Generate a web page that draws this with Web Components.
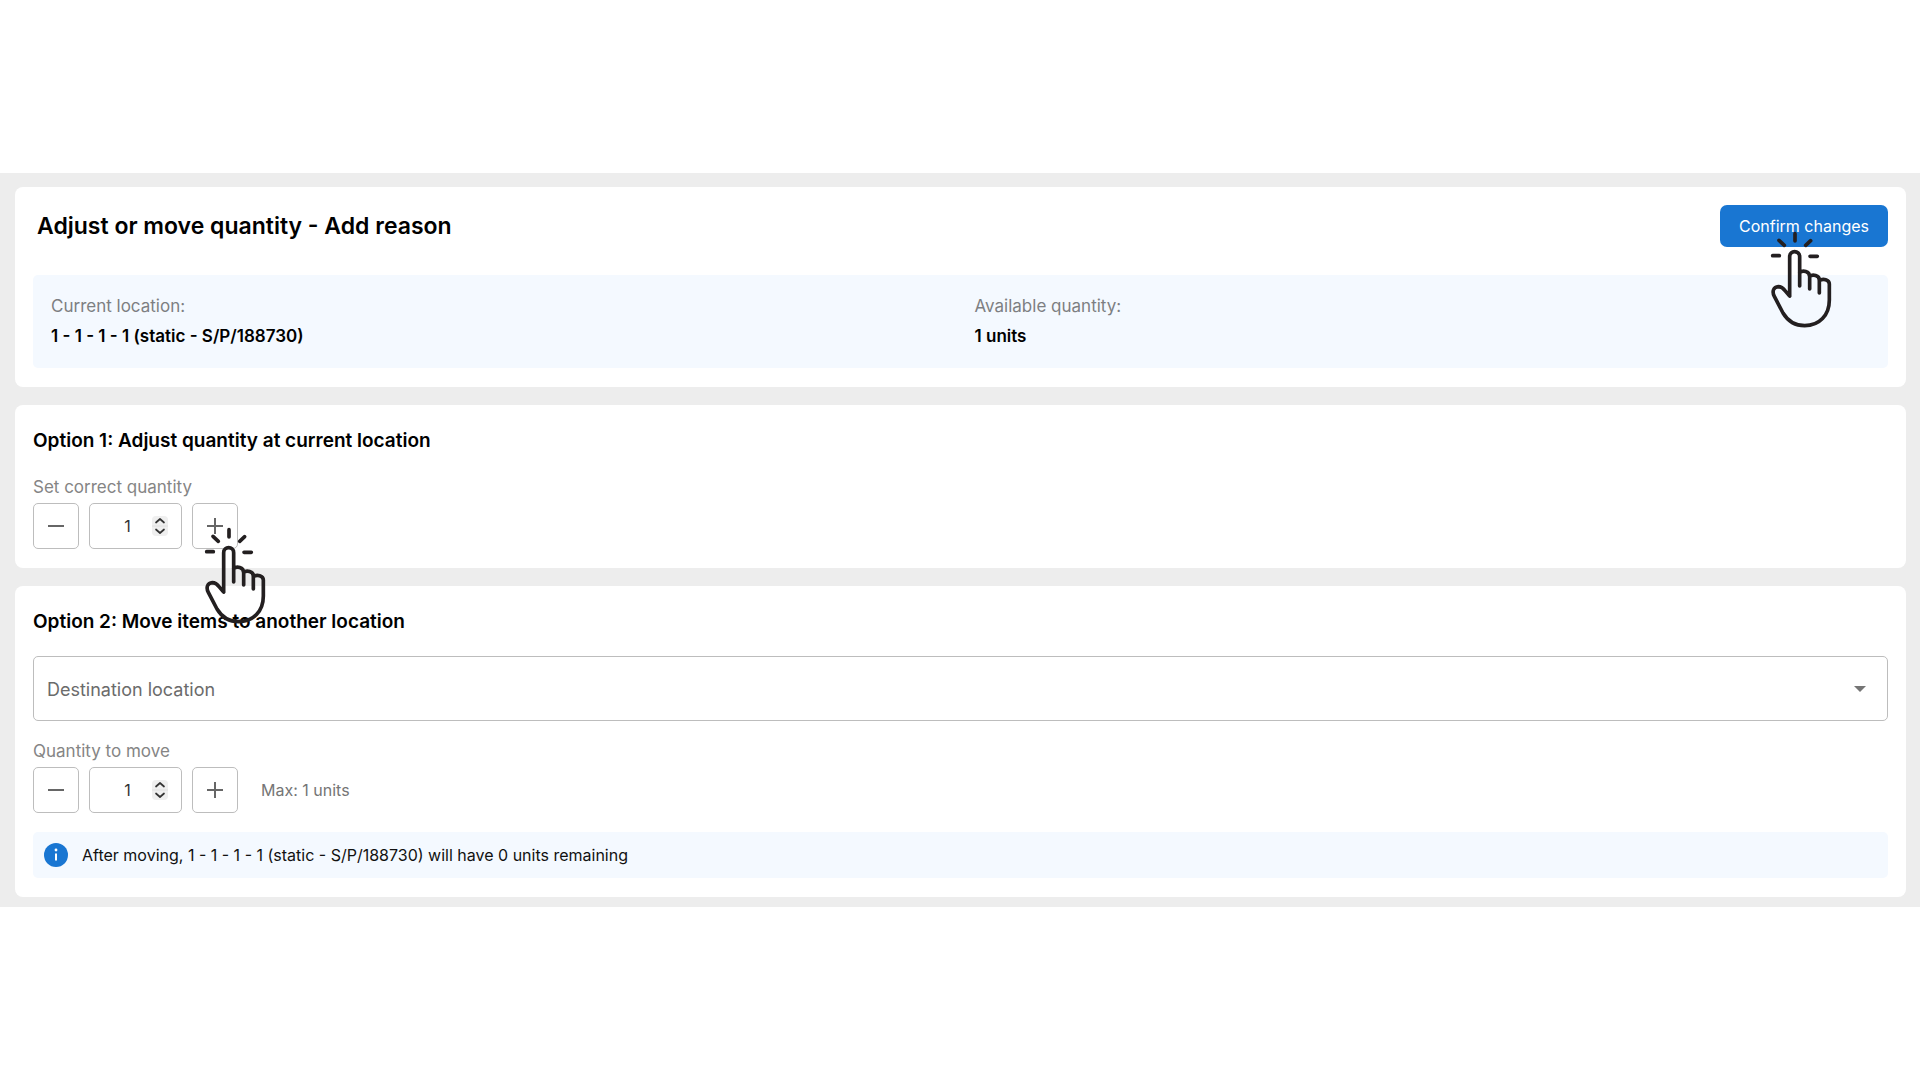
<!DOCTYPE html>
<html lang="en">
<head>
<meta charset="utf-8">
<title>Adjust or move quantity</title>
<style>
  html { background: #fff; }
  body { margin: 0; min-height: 100vh; display: flex; flex-direction: column; justify-content: center; font-family: Inter, "Liberation Sans", sans-serif; color: #000; }
</style>
</head>
<body>
<adjust-page></adjust-page>
<script>
const define = (name, html, setup) => {
  const template = document.createElement('template');
  template.innerHTML = html;
  customElements.define(name, class extends HTMLElement {
    constructor() {
      super();
      this.attachShadow({ mode: 'open' }).append(template.content.cloneNode(true));
    }
    connectedCallback() { if (setup) setup(this, this.shadowRoot); }
  });
};

define('tap-hand', `
<style>
  :host { display: block; pointer-events: none; }
  svg { display: block; width: 61px; height: 97px; overflow: visible; }
</style>
<svg viewBox="0 0 183 291" fill="none" stroke="#231f20" stroke-width="11" stroke-linecap="round" stroke-linejoin="round" aria-hidden="true">
  <path d="M75 8V30M27 28L43 43M122 29L107 43M8 74H28M120 76H142"/>
  <path d="M59 195V77C59 57 89 57 89 77V165M89 125C98 117 119 120 119 137V174M119 136C128 129 148 133 148 147V186M148 149C159 141 178 146 178 159V207C178 253 148 284 104 284C76 284 54 271 39 246L13 196C5 180 11 168 25 167C34 167 40 172 45 179L59 195"/>
</svg>`);

define('app-card', `
<style>
  :host { display: block; background: #fff; border-radius: 8px; padding: 18px 18px 19px; }
  ::slotted(h2) { margin: 6px 0 22px; font-size: 19px; line-height: 24px; font-weight: 600; }
</style>
<slot></slot>`);

define('location-field', `
<style>
  :host { display: flex; flex-direction: column; gap: 6px; font-size: 17px; line-height: 24px; font-weight: 600; }
  span { color: #7d7f82; font-weight: 400; }
</style>
<span></span><slot></slot>`, (el, root) => {
  root.querySelector('span').textContent = el.getAttribute('label');
});

define('quantity-stepper', `
<style>
  :host { display: flex; flex-direction: column; gap: 4px; }
  label { font-size: 17px; line-height: 24px; color: #858585; }
  .row { display: flex; align-items: center; gap: 10px; }
  .plus { position: relative; }
  button { display: grid; place-items: center; box-sizing: border-box; width: 46px; height: 46px; padding: 0; border: 1px solid #bdbdbd; border-radius: 5px; background: #fff; }
  .box { display: flex; align-items: center; box-sizing: border-box; width: 93px; height: 46px; padding: 0 13px; border: 1px solid #bdbdbd; border-radius: 5px; }
  input { flex: 1; min-width: 0; border: 0; padding: 0; outline: 0; background: none; font: 16px/24px Inter, sans-serif; color: #333; text-align: center; appearance: textfield; }
  input::-webkit-inner-spin-button, input::-webkit-outer-spin-button { appearance: none; margin: 0; }
  svg { display: block; }
  ::slotted(small) { margin-left: 13px; font-size: 16px; line-height: 24px; color: #757575; }
  ::slotted(tap-hand) { position: absolute; left: 12px; top: 24px; z-index: 2; }
</style>
<label for="qty"></label>
<div class="row">
  <button type="button" aria-label="Decrease"><svg width="18" height="18" viewBox="0 0 18 18" stroke="#666" stroke-width="2"><path d="M1 9H17"/></svg></button>
  <div class="box">
    <input id="qty" type="number" value="1">
    <svg width="16" height="20" viewBox="0 0 16 20" fill="none" stroke="#333" stroke-width="1.700" stroke-linecap="round" stroke-linejoin="round"><rect width="16" height="20" rx="4" fill="#efefef" stroke="none"/><path d="M0 10H16" stroke="#e0e0e0" stroke-width="1"/><path d="M4 6.500L8 3L12 6.500M4 13.500L8 17L12 13.500"/></svg>
  </div>
  <div class="plus">
    <button type="button" aria-label="Increase"><svg width="18" height="18" viewBox="0 0 18 18" stroke="#666" stroke-width="2"><path d="M1 9H17M9 1V17"/></svg></button>
    <slot name="pointer"></slot>
  </div>
  <slot name="note"></slot>
</div>`, (el, root) => {
  root.querySelector('label').textContent = el.getAttribute('label');
});

define('location-select', `
<style>
  :host { display: grid; align-items: center; }
  select, svg { grid-area: 1 / 1; }
  select { box-sizing: border-box; width: 100%; height: 65px; padding: 2px 48px 0 13px; border: 1px solid #bdbdbd; border-radius: 5px; background: #fff; appearance: none; font: 18px/28px Inter, sans-serif; color: #6b6b6b; }
  svg { justify-self: end; margin-right: 22px; pointer-events: none; }
</style>
<select aria-label="Destination location"><option>Destination location</option></select>
<svg width="12" height="6" viewBox="0 0 12 6"><path d="M0 0H12L6 6Z" fill="#757575"/></svg>`);

define('info-banner', `
<style>
  :host { display: flex; align-items: center; gap: 14px; padding: 11px; border-radius: 5px; background: #f4f9ff; font-size: 16px; line-height: 24px; color: #111; }
</style>
<svg width="24" height="24" viewBox="0 0 24 24" aria-hidden="true"><circle cx="12" cy="12" r="12" fill="#1976d2"/><circle cx="12" cy="7" r="1.400" fill="#fff"/><path d="M12 10.500V17.500" stroke="#fff" stroke-width="2"/></svg>
<span><slot></slot></span>`);

define('confirm-button', `
<style>
  :host { display: block; position: relative; }
  button { display: block; height: 42px; padding: 0 19px; border: 0; border-radius: 7px; background: #1976d2; color: #fff; font: 16px/24px Inter, sans-serif; }
  ::slotted(tap-hand) { position: absolute; right: 57px; top: 26px; z-index: 2; }
</style>
<button type="button">Confirm changes</button>
<slot name="pointer"></slot>`);

define('adjust-page', `
<style>
  :host { display: flex; flex-direction: column; gap: 18px; padding: 14px 14px 10px 15px; background: #ededed; }
  header { display: flex; align-items: center; justify-content: space-between; padding-left: 4px; margin-bottom: 28px; }
  h1 { margin: 0; font-size: 23px; line-height: 30px; font-weight: 600; }
  .summary { display: grid; grid-template-columns: 1fr 1fr; gap: 28px; padding: 19px 18px 20px; border-radius: 5px; background: #f4f9ff; }
  location-select { margin-bottom: 18px; }
  info-banner { margin-top: 19px; }
</style>
<app-card>
  <header><h1>Adjust or move quantity - Add reason</h1><confirm-button><tap-hand slot="pointer"></tap-hand></confirm-button></header>
  <div class="summary">
    <location-field label="Current location:">1 - 1 - 1 - 1 (static - S/P/188730)</location-field>
    <location-field label="Available quantity:">1 units</location-field>
  </div>
</app-card>
<app-card>
  <h2>Option 1: Adjust quantity at current location</h2>
  <quantity-stepper label="Set correct quantity"><tap-hand slot="pointer"></tap-hand></quantity-stepper>
</app-card>
<app-card>
  <h2>Option 2: Move items to another location</h2>
  <location-select></location-select>
  <quantity-stepper label="Quantity to move"><small slot="note">Max: 1 units</small></quantity-stepper>
  <info-banner>After moving, 1 - 1 - 1 - 1 (static - S/P/188730) will have 0 units remaining</info-banner>
</app-card>`);
</script>
</body>
</html>
